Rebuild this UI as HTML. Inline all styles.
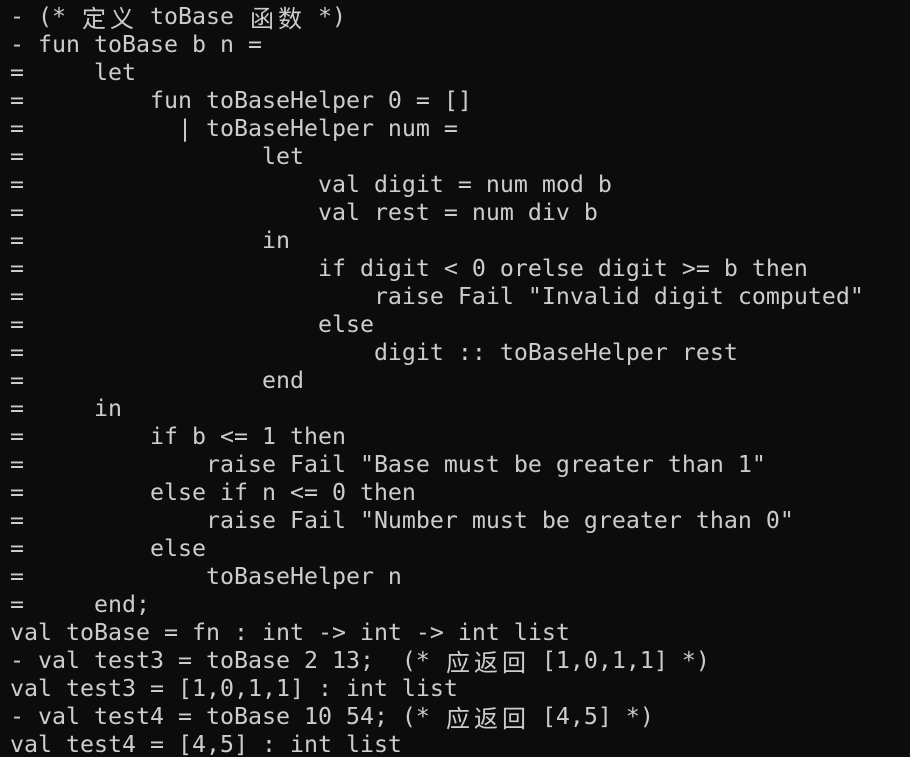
<!DOCTYPE html>
<html><head><meta charset="utf-8"><style>
html,body{margin:0;padding:0;background:#0c0c0c;width:910px;height:757px;overflow:hidden}
pre{margin:0;padding:3px 0 0 10px;font-family:"DejaVu Sans Mono","Noto Sans CJK SC",monospace;font-size:23.25px;line-height:28px;color:#cccccc;white-space:pre}
.c{display:inline-block;width:28px;text-align:center;font-family:"Noto Sans CJK SC",sans-serif;font-size:24px;line-height:28px;vertical-align:top}
</style></head><body><pre>- (* <span class="c">定</span><span class="c">义</span> toBase <span class="c">函</span><span class="c">数</span> *)
- fun toBase b n =
=     let
=         fun toBaseHelper 0 = []
=           | toBaseHelper num =
=                 let
=                     val digit = num mod b
=                     val rest = num div b
=                 in
=                     if digit &lt; 0 orelse digit &gt;= b then
=                         raise Fail "Invalid digit computed"
=                     else
=                         digit :: toBaseHelper rest
=                 end
=     in
=         if b &lt;= 1 then
=             raise Fail "Base must be greater than 1"
=         else if n &lt;= 0 then
=             raise Fail "Number must be greater than 0"
=         else
=             toBaseHelper n
=     end;
val toBase = fn : int -&gt; int -&gt; int list
- val test3 = toBase 2 13;  (* <span class="c">应</span><span class="c">返</span><span class="c">回</span> [1,0,1,1] *)
val test3 = [1,0,1,1] : int list
- val test4 = toBase 10 54; (* <span class="c">应</span><span class="c">返</span><span class="c">回</span> [4,5] *)
val test4 = [4,5] : int list
</pre></body></html>
